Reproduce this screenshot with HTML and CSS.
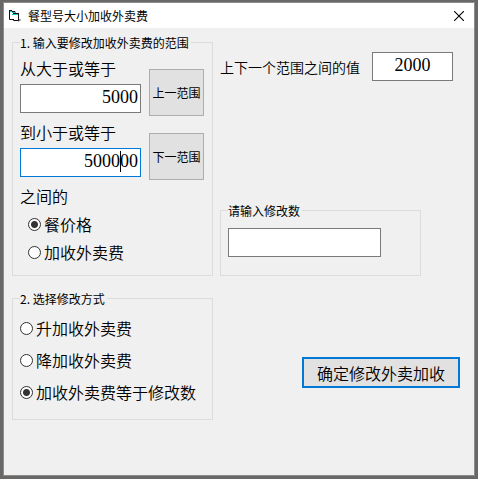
FILE: index.html
```
<!DOCTYPE html>
<html lang="zh-CN">
<head>
  <meta charset="UTF-8">
  <meta name="viewport" content="width=device-width, initial-scale=1.0">
  <title>餐型号大小加收外卖费</title>
  <link rel="stylesheet" href="styles.css">
</head>
<body>

  <div class="window">
    <header class="titlebar">
      <svg class="app-icon" width="14" height="12" viewBox="0 0 14 12" aria-hidden="true">
        <path d="M10 8l3.500 2-3.500 2z" fill="#888"/>
        <path d="M1.500 1.500L5.500 2.500V4.500L10.500 4.500V11L5.500 10L1.500 9.500z" fill="#fff"/>
        <path d="M1.500 1v8.500H5M5.500 9v1.500H10.500V4" fill="none" stroke="#111"/>
        <path d="M1 .5h3M4 1.500h3v2M5 3.500h6" fill="none" stroke="#111"/>
        <path d="M2 1.500h2M4 2.500h2.500M4 4.500h6" fill="none" stroke="#18c8c8"/>
      </svg>
      <h1>餐型号大小加收外卖费</h1>
      <button class="close-btn" type="button" aria-label="关闭">
        <svg width="10" height="10" viewBox="0 0 10 10">
          <path d="M0 0l10 10M10 0L0 10" fill="none" stroke="#000" stroke-width="1.1"/>
        </svg>
      </button>
    </header>

    <form class="content">
      <fieldset class="group range">
        <legend>1. 输入要修改加收外卖费的范围</legend>
        <div class="range-row">
          <div class="field">
            <label for="rangeFrom">从大于或等于</label>
            <input type="text" class="number" id="rangeFrom" value="5000">
          </div>
          <button class="range-btn" type="button">上一范围</button>
        </div>
        <div class="range-row">
          <div class="field">
            <label for="rangeTo">到小于或等于</label>
            <div class="active-box">
              <input type="text" class="number active" id="rangeTo" value="500000">
              <span class="caret"></span>
            </div>
          </div>
          <button class="range-btn" type="button">下一范围</button>
        </div>
        <p>之间的</p>
        <div class="target-list">
          <label class="option"><input type="radio" name="target" checked>餐价格</label>
          <label class="option"><input type="radio" name="target">加收外卖费</label>
        </div>
      </fieldset>

      <div class="side">
        <div class="step-row">
          <label for="step">上下一个范围之间的值</label>
          <input type="text" class="step" id="step" value="2000">
        </div>
        <fieldset class="group amount">
          <legend>请输入修改数</legend>
          <input type="text" id="amount" aria-label="请输入修改数">
        </fieldset>
      </div>

      <fieldset class="group mode">
        <legend>2. 选择修改方式</legend>
        <label class="option"><input type="radio" name="mode">升加收外卖费</label>
        <label class="option"><input type="radio" name="mode">降加收外卖费</label>
        <label class="option"><input type="radio" name="mode" checked>加收外卖费等于修改数</label>
      </fieldset>

      <button class="submit-btn" type="button">确定修改外卖加收</button>
    </form>
  </div>

</body>
</html>
```
FILE: styles.css
```
* {
  box-sizing: border-box;
}

body {
  margin: 0;
  padding: 2px 3px 3px;
  min-height: 100vh;
  display: flex;
  background-color: #6a6867;
  font-family: "Noto Sans CJK SC", sans-serif;
  font-size: 16px;
  font-weight: 350;
  line-height: 24px;
  color: #000;
}

.window {
  flex: 1;
  border: 1px solid #8c8c8c;
  background-color: #f0f0f0;
}

/* title bar */
.titlebar {
  display: flex;
  align-items: center;
  height: 25px;
  padding-left: 4px;
  background-color: #fff;
}

.app-icon {
  margin-right: 6px;
}

.titlebar h1 {
  flex: 1;
  margin: 0;
  font-size: 12px;
  font-weight: 400;
}

.close-btn {
  display: flex;
  padding: 7px 10px;
  border: none;
  background: none;
}

/* form */
.content {
  display: grid;
  grid-template-columns: 201fr 240fr;
  column-gap: 7px;
  row-gap: 15px;
  padding: 7px 14px 14px 8px;
}

.group {
  min-width: 0;
  margin: 0;
  padding: 6px 8px 9px 7px;
  border: 1px solid #dcdcdc;
}

.group legend {
  padding: 0 2px 0 0;
  font-size: 12px;
  font-weight: 400;
  line-height: 15px;
}

input[type="text"] {
  display: block;
  width: 100%;
  height: 29px;
  padding: 0 2px 2px;
  border: 1px solid #7a7a7a;
  border-radius: 0;
  background-color: #fff;
  font-family: "Liberation Serif", serif;
  font-size: 18px;
  color: #000;
  outline: none;
}

input.number {
  text-align: right;
}

input.active {
  border-color: #0078d7;
}

.range-row {
  display: flex;
  gap: 8px;
  height: 64px;
}

.field {
  flex: 1;
  min-width: 0;
}

.field label {
  display: block;
  margin-bottom: 4px;
}

.active-box {
  position: relative;
}

/* text cursor before the last two digits */
.caret {
  position: absolute;
  top: 3px;
  right: 20px;
  width: 1px;
  height: 21px;
  background-color: #000;
}

.range-btn {
  align-self: flex-end;
  width: 55px;
  height: 47px;
  margin-bottom: 4px;
  padding: 0;
  border: 1px solid #adadad;
  background-color: #e1e1e1;
  font-family: inherit;
  font-size: 12px;
  color: #000;
}

.range p {
  margin: 0 0 2px;
}

.option {
  display: flex;
  align-items: center;
  gap: 3px;
  line-height: 32px;
}

.target-list {
  padding-left: 8px;
}

.target-list .option {
  line-height: 28px;
}

input[type="radio"] {
  appearance: none;
  flex: none;
  width: 13px;
  height: 13px;
  margin: 0;
  border: 1px solid #333;
  border-radius: 50%;
  background-color: #fff;
}

input[type="radio"]:checked {
  background-image: radial-gradient(circle, #333 3px, transparent 4px);
}

.side {
  display: flex;
  flex-direction: column;
  justify-content: space-between;
  padding-top: 17px;
}

.step-row {
  display: flex;
  align-items: center;
  gap: 12px;
  padding-right: 7px;
  font-size: 14px;
}

.step-row label {
  white-space: nowrap;
}

input.step {
  flex: 1;
  min-width: 0;
  text-align: center;
}

.amount {
  margin-right: 39px;
  padding: 10px 39px 18px 7px;
}

.mode {
  padding-bottom: 11px;
}

.submit-btn {
  justify-self: end;
  align-self: start;
  margin-top: 66px;
  height: 31px;
  padding: 0 13px;
  border: 2px solid #0078d7;
  background-color: #e1e1e1;
  font-family: inherit;
  font-size: 16px;
  font-weight: inherit;
  color: #000;
}
```
